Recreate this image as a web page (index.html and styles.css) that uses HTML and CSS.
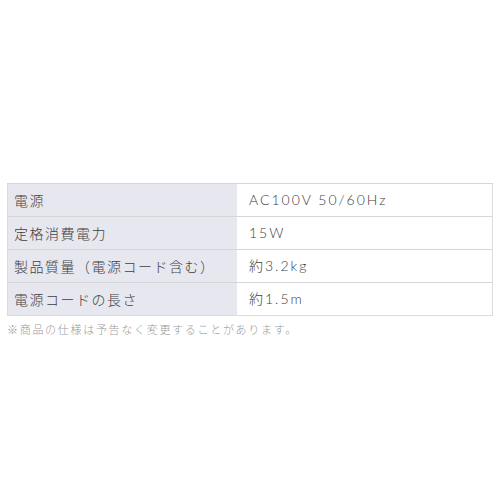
FILE: index.html
```html
<!DOCTYPE html>
<html lang="ja">
<head>
<meta charset="utf-8">
<link rel="stylesheet" href="styles.css">
</head>
<body>
<div class="page">
  <table class="spec">
    <tr><th>電源</th><td>AC100V 50/60Hz</td></tr>
    <tr><th>定格消費電力</th><td>15W</td></tr>
    <tr><th>製品質量（電源コード含む）</th><td>約3.2kg</td></tr>
    <tr><th>電源コードの長さ</th><td>約1.5m</td></tr>
  </table>
  <p class="note">※商品の仕様は予告なく変更することがあります。</p>
</div>
</body>
</html>
```

FILE: styles.css
```css
html, body {
  margin: 0;
  padding: 0;
  background: #ffffff;
}
.page {
  padding: 183px 7px 0 7px;
  font-family: "Noto Sans CJK JP", "Noto Sans", sans-serif;
}
.spec {
  width: 486px;
  border-collapse: collapse;
  border: 1px solid #dcdcdf;
  table-layout: fixed;
}
.spec tr {
  height: 33px;
}
.spec th,
.spec td {
  border-top: 1px solid #d6d6da;
  padding: 0 0 0 6px;
  text-align: left;
  font-weight: 300;
  font-size: 14px;
  letter-spacing: 1.5px;
  color: #404040;
  vertical-align: middle;
  line-height: 1;
}
.spec th {
  width: 223px;
  background: #e6e7ef;
}
.spec td {
  background: #ffffff;
  padding-left: 12px;
  font-family: "Lato", "Noto Sans CJK JP", sans-serif;
  letter-spacing: 2px;
}
.note {
  margin: 6px 0 0 0;
  font-size: 11px;
  letter-spacing: 1.7px;
  color: #9a9a9a;
  font-weight: 300;
  line-height: 14px;
}
```
